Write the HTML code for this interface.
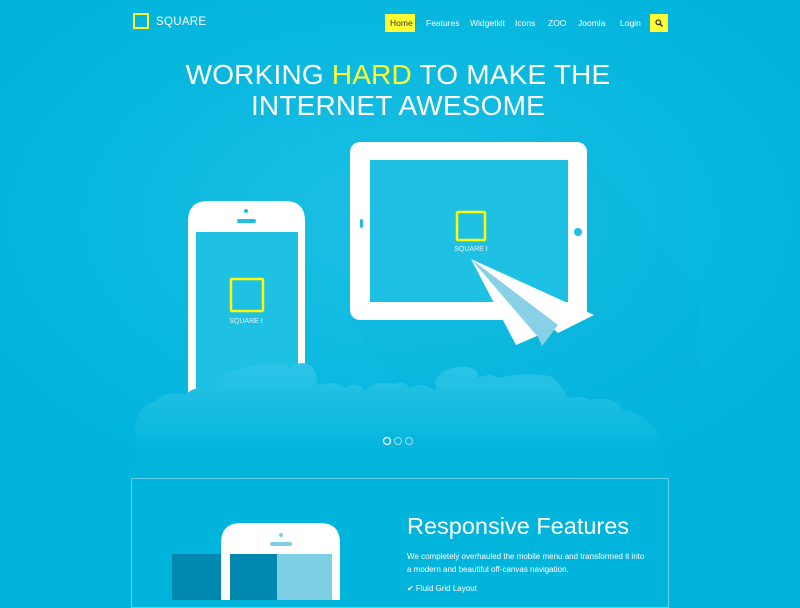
<!DOCTYPE html>
<html><head><meta charset="utf-8"><style>
*{margin:0;padding:0;box-sizing:border-box}
body{width:800px;height:600px;overflow:hidden;background:#00b4dc;font-family:"Liberation Sans",sans-serif;color:#fff;position:relative}
.a{position:absolute}
.nav{font-size:8.5px;top:18px}
h1{position:absolute;top:59px;left:0;width:796px;text-align:center;font-weight:normal;font-size:28px;line-height:31px;letter-spacing:0.2px}
h1 span{color:#ffff33}
</style></head><body>
<div class="a" style="left:0;top:0;width:800px;height:470px;background:radial-gradient(ellipse at 400px 220px,#1ec0e4 0,#0ab8df 280px,#00b4dc 480px)"></div>
<div class="a" style="left:133px;top:13px;width:16px;height:16px;border:2px solid #ffff33"></div>
<div class="a" style="left:156px;top:16px;font-size:11.5px;letter-spacing:.3px">SQUARE</div>
<div class="a" style="left:385px;top:14px;width:30px;height:18px;background:#ffff33"></div>
<div class="a nav" style="left:390px;color:#333">Home</div>
<div class="a nav" style="left:426px">Features</div>
<div class="a nav" style="left:470px">Widgetkit</div>
<div class="a nav" style="left:515px">Icons</div>
<div class="a nav" style="left:548px">ZOO</div>
<div class="a nav" style="left:578px">Joomla</div>
<div class="a nav" style="left:620px">Login</div>
<div class="a" style="left:650px;top:14px;width:18px;height:18px;background:#ffff33"></div>
<svg class="a" style="left:655px;top:19px" width="8" height="8"><circle cx="3.3" cy="3.3" r="2.3" fill="none" stroke="#333" stroke-width="1.3"/><line x1="5" y1="5" x2="7.5" y2="7.5" stroke="#333" stroke-width="1.5"/></svg>
<h1>WORKING <span>HARD</span> TO MAKE THE<br>INTERNET AWESOME</h1>
<svg class="a" style="left:0;top:0" width="800" height="470">
<defs><linearGradient id="c" x1="0" y1="360" x2="0" y2="450" gradientUnits="userSpaceOnUse"><stop offset="0" stop-color="#2ec5e7"/><stop offset=".6" stop-color="#14bbe0"/><stop offset="1" stop-color="#03b5dc"/></linearGradient></defs>
<polygon points="587,150 700,290 700,420 420,420 350,320" fill="#0aaed6" opacity=".15"/>
<rect x="350" y="142" width="237" height="178" rx="10" fill="#fff"/>
<rect x="370" y="160" width="198" height="142" fill="#1ec0e4"/>
<rect x="360" y="219" width="3" height="9" rx="1.5" fill="#1ec0e4"/>
<circle cx="578" cy="232" r="4" fill="#1ec0e4"/>
<rect x="457" y="212" width="28" height="28" rx="1" fill="none" stroke="#ffff00" stroke-width="2.5"/>
<text x="471" y="251" font-size="7" text-anchor="middle" fill="#e0f6fc" font-family="Liberation Sans">SQUARE I</text>
<polygon points="471,259 594,315 558,333" fill="#fff"/>
<polygon points="471,259 560,326 516,345" fill="#fff"/>
<polygon points="471,259 558,325 542,346 538,337" fill="#87d0e6"/>
<path d="M188,400 V221 Q188,201 208,201 H285 Q305,201 305,221 V400 Z" fill="#fff"/>
<rect x="196" y="232" width="102" height="170" fill="#1ec0e4"/>
<circle cx="246" cy="211" r="2" fill="#1ec0e4"/>
<rect x="237" y="219" width="19" height="4" rx="2" fill="#1ec0e4"/>
<rect x="231" y="279" width="32" height="32" rx="1" fill="none" stroke="#ffff00" stroke-width="2.5"/>
<text x="246" y="323" font-size="7" text-anchor="middle" fill="#e0f6fc" font-family="Liberation Sans">SQUARE I</text>
<path fill="url(#c)" d="M135,460 L135,425 Q140,405 155,402 Q165,390 185,395 Q195,385 215,388 Q225,368 260,365 Q280,360 290,368 Q300,360 310,365 Q318,372 317,385 Q335,380 345,388 Q355,380 365,390 Q375,380 395,384 Q403,380 410,388 Q420,382 430,388 Q440,392 435,383 Q440,368 460,367 Q480,366 478,378 Q490,372 498,378 Q520,372 550,376 Q560,382 568,398 Q580,395 590,400 Q615,395 622,410 Q640,412 650,425 Q663,430 663,460 Z"/>
<circle cx="387" cy="441" r="3.5" fill="none" stroke="#fff" stroke-width="1.2"/>
<circle cx="398" cy="441" r="3.5" fill="none" stroke="#9fe0f0" stroke-width="1"/>
<circle cx="409" cy="441" r="3.5" fill="none" stroke="#9fe0f0" stroke-width="1"/>
</svg>
<div class="a" style="left:131px;top:478px;width:538px;height:130px;border:1px solid rgba(255,255,255,.4)"></div>
<svg class="a" style="left:0;top:470px" width="800" height="130">
<rect x="172" y="84" width="50" height="50" fill="#0088b0"/>
<path d="M221,130 V73 Q221,53 241,53 H320 Q340,53 340,73 V130 Z" fill="#fff"/>
<rect x="230" y="84" width="47" height="50" fill="#0088b0"/>
<rect x="277" y="84" width="55" height="50" fill="#7fcfe4"/>
<circle cx="281" cy="65" r="2" fill="#7fcfe4"/>
<rect x="270" y="72" width="22" height="4" rx="2" fill="#7fcfe4"/>
</svg>
<div class="a" style="left:407px;top:513px;font-size:23.5px">Responsive Features</div>
<div class="a" style="left:407px;top:550px;font-size:8px;line-height:13px;width:240px">We completely overhauled the mobile menu and transformed it into a modern and beautiful off-canvas navigation.</div>
<div class="a" style="left:407px;top:584px;font-size:8px">✔ Fluid Grid Layout</div>
</body></html>
